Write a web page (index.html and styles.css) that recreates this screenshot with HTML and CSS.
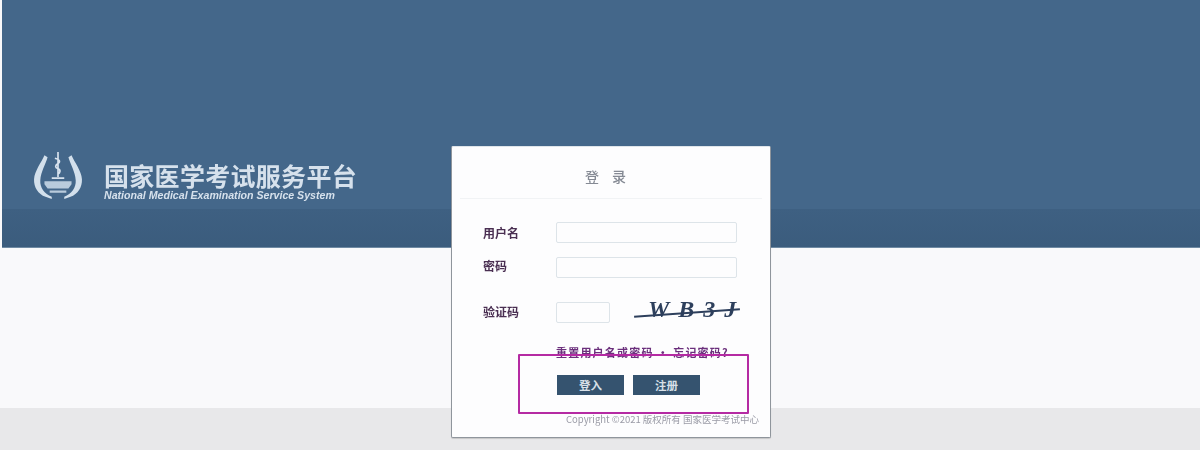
FILE: index.html
```html
<!DOCTYPE html>
<html lang="zh-CN">
<head>
<meta charset="utf-8">
<title>国家医学考试服务平台</title>
<link rel="stylesheet" href="styles.css">
</head>
<body>
<div class="page">
  <header class="header">
    <div class="header-top">
      <div class="brand">
        <svg class="logo" viewBox="0 0 48 48" width="50" height="50" aria-hidden="true">
          <path class="laurel" d="M11 4C8 11 1.500 19 1 27C.7 35 5 41 12 44L18 46L18 44C11 41 6.500 35 7 28C7.500 20 12 13 14 6Z"/>
          <path class="laurel" d="M37 4C40 11 46.500 19 47 27C47.300 35 43 41 36 44L30 46L30 44C37 41 41.500 35 41 28C40.500 20 36 13 34 6Z"/>
          <path class="staff" d="M24 1V25M21 7C25 8 27 10 24 12C21 14 21 16 24 17C27 18 26 21 24 22M18 26H30"/>
          <path class="base" d="M11 29H37V32L34 36H14L11 32ZM16 38H32V40H16Z"/>
        </svg>
        <div class="brand-text">
          <div class="brand-cn">国家医学考试服务平台</div>
          <div class="brand-en">National Medical Examination Service System</div>
        </div>
      </div>
    </div>
    <div class="header-band"></div>
  </header>
  <main class="content"></main>
  <footer class="footer"></footer>

  <section class="card">
    <h1 class="card-title">登 录</h1>
    <form class="form">
      <div class="row row-user"><label class="label">用户名</label><span class="input"></span></div>
      <div class="row row-pass"><label class="label label-pass">密码</label><span class="input"></span></div>
      <div class="row row-code">
        <label class="label">验证码</label><span class="input input-code"></span>
        <span class="captcha">WB3J</span>
      </div>
      <p class="links">重置用户名或密码 · 忘记密码?</p>
      <div class="actions">
        <button class="btn" type="button">登入</button>
        <button class="btn" type="button">注册</button>
      </div>
    </form>
    <p class="copyright">Copyright ©2021 版权所有 国家医学考试中心</p>
  </section>
  <div class="highlight"></div>
</div>
</body>
</html>
```
FILE: styles.css
```css
* { box-sizing: border-box; }
html, body { margin: 0; padding: 0; }
body { font-family: "Noto Sans CJK SC", "Liberation Sans", sans-serif; background: #f9f9fb; }
.page { position: relative; width: 1200px; height: 450px; overflow: hidden; display: flex; flex-direction: column; }

.header { height: 248px; margin-left: 2px; display: flex; flex-direction: column; border-bottom: 1px solid #6f8aa3; flex: none; }
.header-top { height: 209px; flex: none; background: #44678a; display: flex; align-items: flex-end; padding: 0 0 8px 31px; }
.header-band { flex: 1; background: linear-gradient(#3e6082, #3b5c7d); }

.brand { display: flex; align-items: flex-end; gap: 21px; filter: blur(.7px); }
.logo { display: block; }
.laurel { fill: #d3e0ec; }
.staff { fill: none; stroke: #d8e3ee; stroke-width: 1.6; }
.base { fill: #b9cbdc; }
.brand-text { color: #d6e1ec; }
.brand-cn { font-size: 25px; line-height: 24px; font-weight: 700; letter-spacing: .3px; white-space: nowrap; }
.brand-en { font-family: "Liberation Sans", sans-serif; font-size: 10.600px; line-height: 12px; font-weight: 700; font-style: italic; white-space: nowrap; margin-top: 2px; }

.content { height: 160px; flex: none; background: #f9f9fb; }
.footer { flex: 1; background: #e8e8ea; }

.card { position: absolute; left: 451px; top: 146px; width: 320px; height: 292px; background: #fdfdfe; border: 1px solid #8f959c; border-top-color: #dfe5ea; border-radius: 2px; box-shadow: 0 1px 1px rgba(0,0,0,.15); }
.card-title { margin: 13px 8px 0; padding-right: 6px; height: 39px; text-align: center; font-size: 14px; line-height: 33px; font-weight: 500; color: #858a94; letter-spacing: 5px; border-bottom: 1px solid #f1f3f5; filter: blur(.7px); }

.form { display: flex; flex-direction: column; }
.row { display: flex; align-items: center; height: 21px; padding-left: 31px; }
.row-user { margin-top: 23px; }
.row-pass { margin-top: 14px; }
.row-code { margin-top: 18px; height: 32px; }
.label { width: 73px; flex: none; font-size: 12px; line-height: 16px; color: #4a2f52; font-weight: 700; filter: blur(.7px); }
.label-pass { margin-bottom: 3px; }
.input { display: block; width: 181px; height: 21px; background: #fdfdfe; border: 1px solid #dde4e9; border-radius: 2px; }
.input-code { width: 54px; }
.captcha { position: relative; font-family: "Liberation Serif", serif; font-style: italic; font-weight: 700; font-size: 24px; line-height: 24px; letter-spacing: 9px; color: #2d3f5c; margin-left: 24px; padding-left: 14px; margin-top: -7px; width: 108px; white-space: nowrap; filter: blur(.6px); }
.captcha::after { content: ""; position: absolute; left: 0; right: 2px; top: 15px; height: 2px; background: #2d3f5c; transform: rotate(-4deg); }

.links { margin: 17px 0 0 104px; font-size: 11px; line-height: 14px; letter-spacing: 1.200px; color: #6b2f7c; white-space: nowrap; font-weight: 700; filter: blur(.7px); }
.actions { display: flex; gap: 9px; margin: 16px 0 0 105px; }
.btn { width: 67px; height: 20px; padding: 0; border: 0; border-radius: 0; background: #35536f; color: #d8e0e8; font-family: inherit; font-size: 11.500px; font-weight: 700; line-height: 20px; }

.copyright { position: absolute; left: 114px; top: 265px; margin: 0; font-size: 9.500px; line-height: 14px; color: #9a9ba6; white-space: nowrap; filter: blur(.7px); }

.highlight { position: absolute; left: 518px; top: 354px; width: 231px; height: 60px; border: 2px solid #b52aa3; border-radius: 1px; pointer-events: none; }
```
